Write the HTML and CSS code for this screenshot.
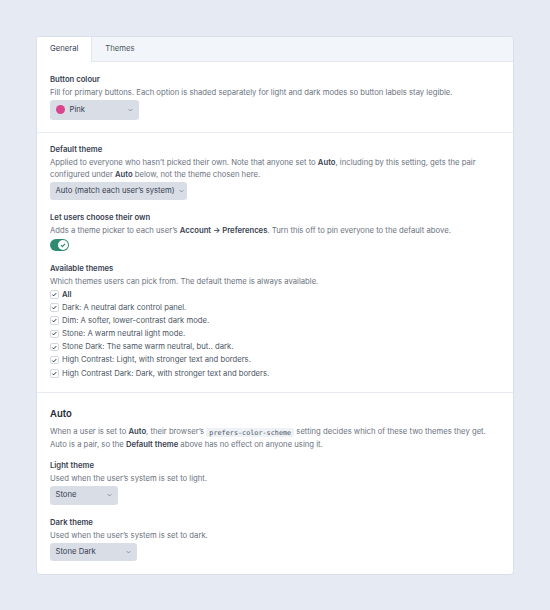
FILE: index.html
```html
<!DOCTYPE html>
<html lang="en">
<head>
    <meta charset="UTF-8">
    <meta name="viewport" content="width=device-width, initial-scale=1.0">
    <title>Theme settings</title>
    <link rel="stylesheet" href="styles.css">
</head>
<body>
    <div class="card">
        <div class="tabs">
            <div class="tab active">General</div>
            <div class="tab">Themes</div>
        </div>

        <div class="section">
            <div class="field">
                <div class="label">Button colour</div>
                <div class="hint">Fill for primary buttons. Each option is shaded separately for light and dark modes so button labels stay legible.</div>
                <div class="select select-colour">
                    <span class="dot"></span>
                    <span class="select-text">Pink</span>
                    <svg class="chevron" viewBox="0 0 8 5"><path d="M1 1l3 3 3-3" /></svg>
                </div>
            </div>
        </div>

        <div class="section">
            <div class="field">
                <div class="label">Default theme</div>
                <div class="hint">Applied to everyone who hasn’t picked their own. Note that anyone set to <b>Auto</b>, including by this setting, gets the pair configured under <b>Auto</b> below, not the theme chosen here.</div>
                <div class="select select-auto">
                    <span class="select-text">Auto (match each user’s system)</span>
                    <svg class="chevron" viewBox="0 0 8 5"><path d="M1 1l3 3 3-3" /></svg>
                </div>
            </div>
            <div class="field">
                <div class="label">Let users choose their own</div>
                <div class="hint">Adds a theme picker to each user’s <b>Account → Preferences</b>. Turn this off to pin everyone to the default above.</div>
                <div class="toggle">
                    <span class="knob">
                        <svg viewBox="0 0 8 8"><path d="M2 4.2l1.4 1.4L6 2.8" /></svg>
                    </span>
                </div>
            </div>
            <div class="field">
                <div class="label">Available themes</div>
                <div class="hint">Which themes users can pick from. The default theme is always available.</div>
                <ul class="checklist">
                    <li><span class="box"><svg viewBox="0 0 8 8"><path d="M1.6 4.1l1.6 1.6 3.3-3.4" /></svg></span><b>All</b></li>
                    <li><span class="box"><svg viewBox="0 0 8 8"><path d="M1.6 4.1l1.6 1.6 3.3-3.4" /></svg></span>Dark: A neutral dark control panel.</li>
                    <li><span class="box"><svg viewBox="0 0 8 8"><path d="M1.6 4.1l1.6 1.6 3.3-3.4" /></svg></span>Dim: A softer, lower-contrast dark mode.</li>
                    <li><span class="box"><svg viewBox="0 0 8 8"><path d="M1.6 4.1l1.6 1.6 3.3-3.4" /></svg></span>Stone: A warm neutral light mode.</li>
                    <li><span class="box"><svg viewBox="0 0 8 8"><path d="M1.6 4.1l1.6 1.6 3.3-3.4" /></svg></span>Stone Dark: The same warm neutral, but.. dark.</li>
                    <li><span class="box"><svg viewBox="0 0 8 8"><path d="M1.6 4.1l1.6 1.6 3.3-3.4" /></svg></span>High Contrast: Light, with stronger text and borders.</li>
                    <li><span class="box"><svg viewBox="0 0 8 8"><path d="M1.6 4.1l1.6 1.6 3.3-3.4" /></svg></span>High Contrast Dark: Dark, with stronger text and borders.</li>
                </ul>
            </div>
        </div>

        <div class="section last">
            <h2>Auto</h2>
            <p class="intro">When a user is set to <b>Auto</b>, their browser’s <code>prefers-color-scheme</code> setting decides which of these two themes they get. Auto is a pair, so the <b>Default theme</b> above has no effect on anyone using it.</p>
            <div class="field">
                <div class="label">Light theme</div>
                <div class="hint">Used when the user’s system is set to light.</div>
                <div class="select select-stone">
                    <span class="select-text">Stone</span>
                    <svg class="chevron" viewBox="0 0 8 5"><path d="M1 1l3 3 3-3" /></svg>
                </div>
            </div>
            <div class="field">
                <div class="label">Dark theme</div>
                <div class="hint">Used when the user’s system is set to dark.</div>
                <div class="select select-stone-dark">
                    <span class="select-text">Stone Dark</span>
                    <svg class="chevron" viewBox="0 0 8 5"><path d="M1 1l3 3 3-3" /></svg>
                </div>
            </div>
        </div>
    </div>
</body>
</html>
```

FILE: styles.css
```css
body {
    margin: 0;
    padding: 36px;
    background-color: #e6ebf3;
    font-family: Inter, "Noto Sans", sans-serif;
    font-size: 7.7px;
    line-height: 11.5px;
    color: #6b7280;
}
.card {
    width: 478px;
    box-sizing: border-box;
    background-color: #fff;
    border: 1px solid #d9e0ea;
    border-radius: 4px;
    overflow: hidden;
}
.tabs {
    display: flex;
    height: 24px;
    background-color: #f2f5f9;
    border-bottom: 1px solid #e2e7ef;
}
.tab {
    padding: 0 13px;
    line-height: 24px;
    color: #4b5563;
}
.tab.active {
    background-color: #fff;
    border-right: 1px solid #e2e7ef;
    height: 25px;
    color: #374151;
}
.section {
    padding: 11.5px 13px 12px;
    border-bottom: 1px solid #e8ecf2;
    display: flex;
    flex-direction: column;
    gap: 12px;
}
.section.last {
    border-bottom: none;
    padding-top: 13.5px;
    padding-bottom: 12.5px;
}
.field {
    display: flex;
    flex-direction: column;
    align-items: flex-start;
}
.label {
    font-weight: 600;
    color: #374151;
    margin-bottom: 1.5px;
}
.hint b,
.intro b {
    font-weight: 600;
    color: #374151;
}
.select {
    display: flex;
    align-items: center;
    box-sizing: border-box;
    height: 18.6px;
    margin-top: 1.5px;
    padding: 0 5px 0 5.5px;
    background-color: #d9dde6;
    border-radius: 3px;
    color: #374151;
    line-height: 10px;
}
.select-text {
    flex: 1;
}
.chevron {
    width: 5px;
    height: 4px;
    fill: none;
    stroke: #6b7280;
    stroke-width: 1.1;
}
.select-colour {
    width: 89px;
    height: 20.3px;
    padding-right: 6px;
}
.select-auto {
    width: 137px;
    padding-right: 3px;
}
.select-auto .chevron {
    margin-left: 3px;
}
.select-stone {
    width: 68px;
    padding-right: 6px;
}
.select-stone-dark {
    width: 87px;
    padding-right: 6px;
}
.dot {
    width: 9px;
    height: 9px;
    border-radius: 50%;
    background-color: #d9468e;
    margin-right: 5px;
}
.toggle {
    width: 19px;
    height: 12px;
    margin-top: 2.3px;
    border-radius: 6px;
    background-color: #2f8a72;
    display: flex;
    justify-content: flex-end;
    align-items: center;
    padding: 0 1px;
    box-sizing: border-box;
}
.knob {
    width: 10px;
    height: 10px;
    border-radius: 50%;
    background-color: #fff;
    display: flex;
    align-items: center;
    justify-content: center;
}
.knob svg {
    width: 8px;
    height: 8px;
    fill: none;
    stroke: #2f8a72;
    stroke-width: 1.2;
}
.checklist {
    list-style: none;
    margin: 0;
    padding: 0;
}
.checklist li {
    display: flex;
    align-items: center;
    height: 13.2px;
    color: #4b5563;
}
.checklist li b {
    font-weight: 600;
    color: #374151;
}
.box {
    width: 8.5px;
    height: 8.5px;
    box-sizing: border-box;
    border: 1px solid #d4d9e1;
    border-radius: 2px;
    margin-right: 3.5px;
    display: flex;
    align-items: center;
    justify-content: center;
    background-color: #fff;
}
.box svg {
    width: 7px;
    height: 7px;
    fill: none;
    stroke: #1f2937;
    stroke-width: 1.2;
}
h2 {
    margin: 0;
    font-size: 9.5px;
    line-height: 14px;
    font-weight: 600;
    color: #1f2937;
}
.intro {
    margin: -6.5px 0 -2px;
}
code {
    font-family: "DejaVu Sans Mono", monospace;
    font-size: 6.8px;
    color: #4b5563;
    background-color: #eef1f5;
    border-radius: 2px;
    padding: 0.5px 3px;
}
```
